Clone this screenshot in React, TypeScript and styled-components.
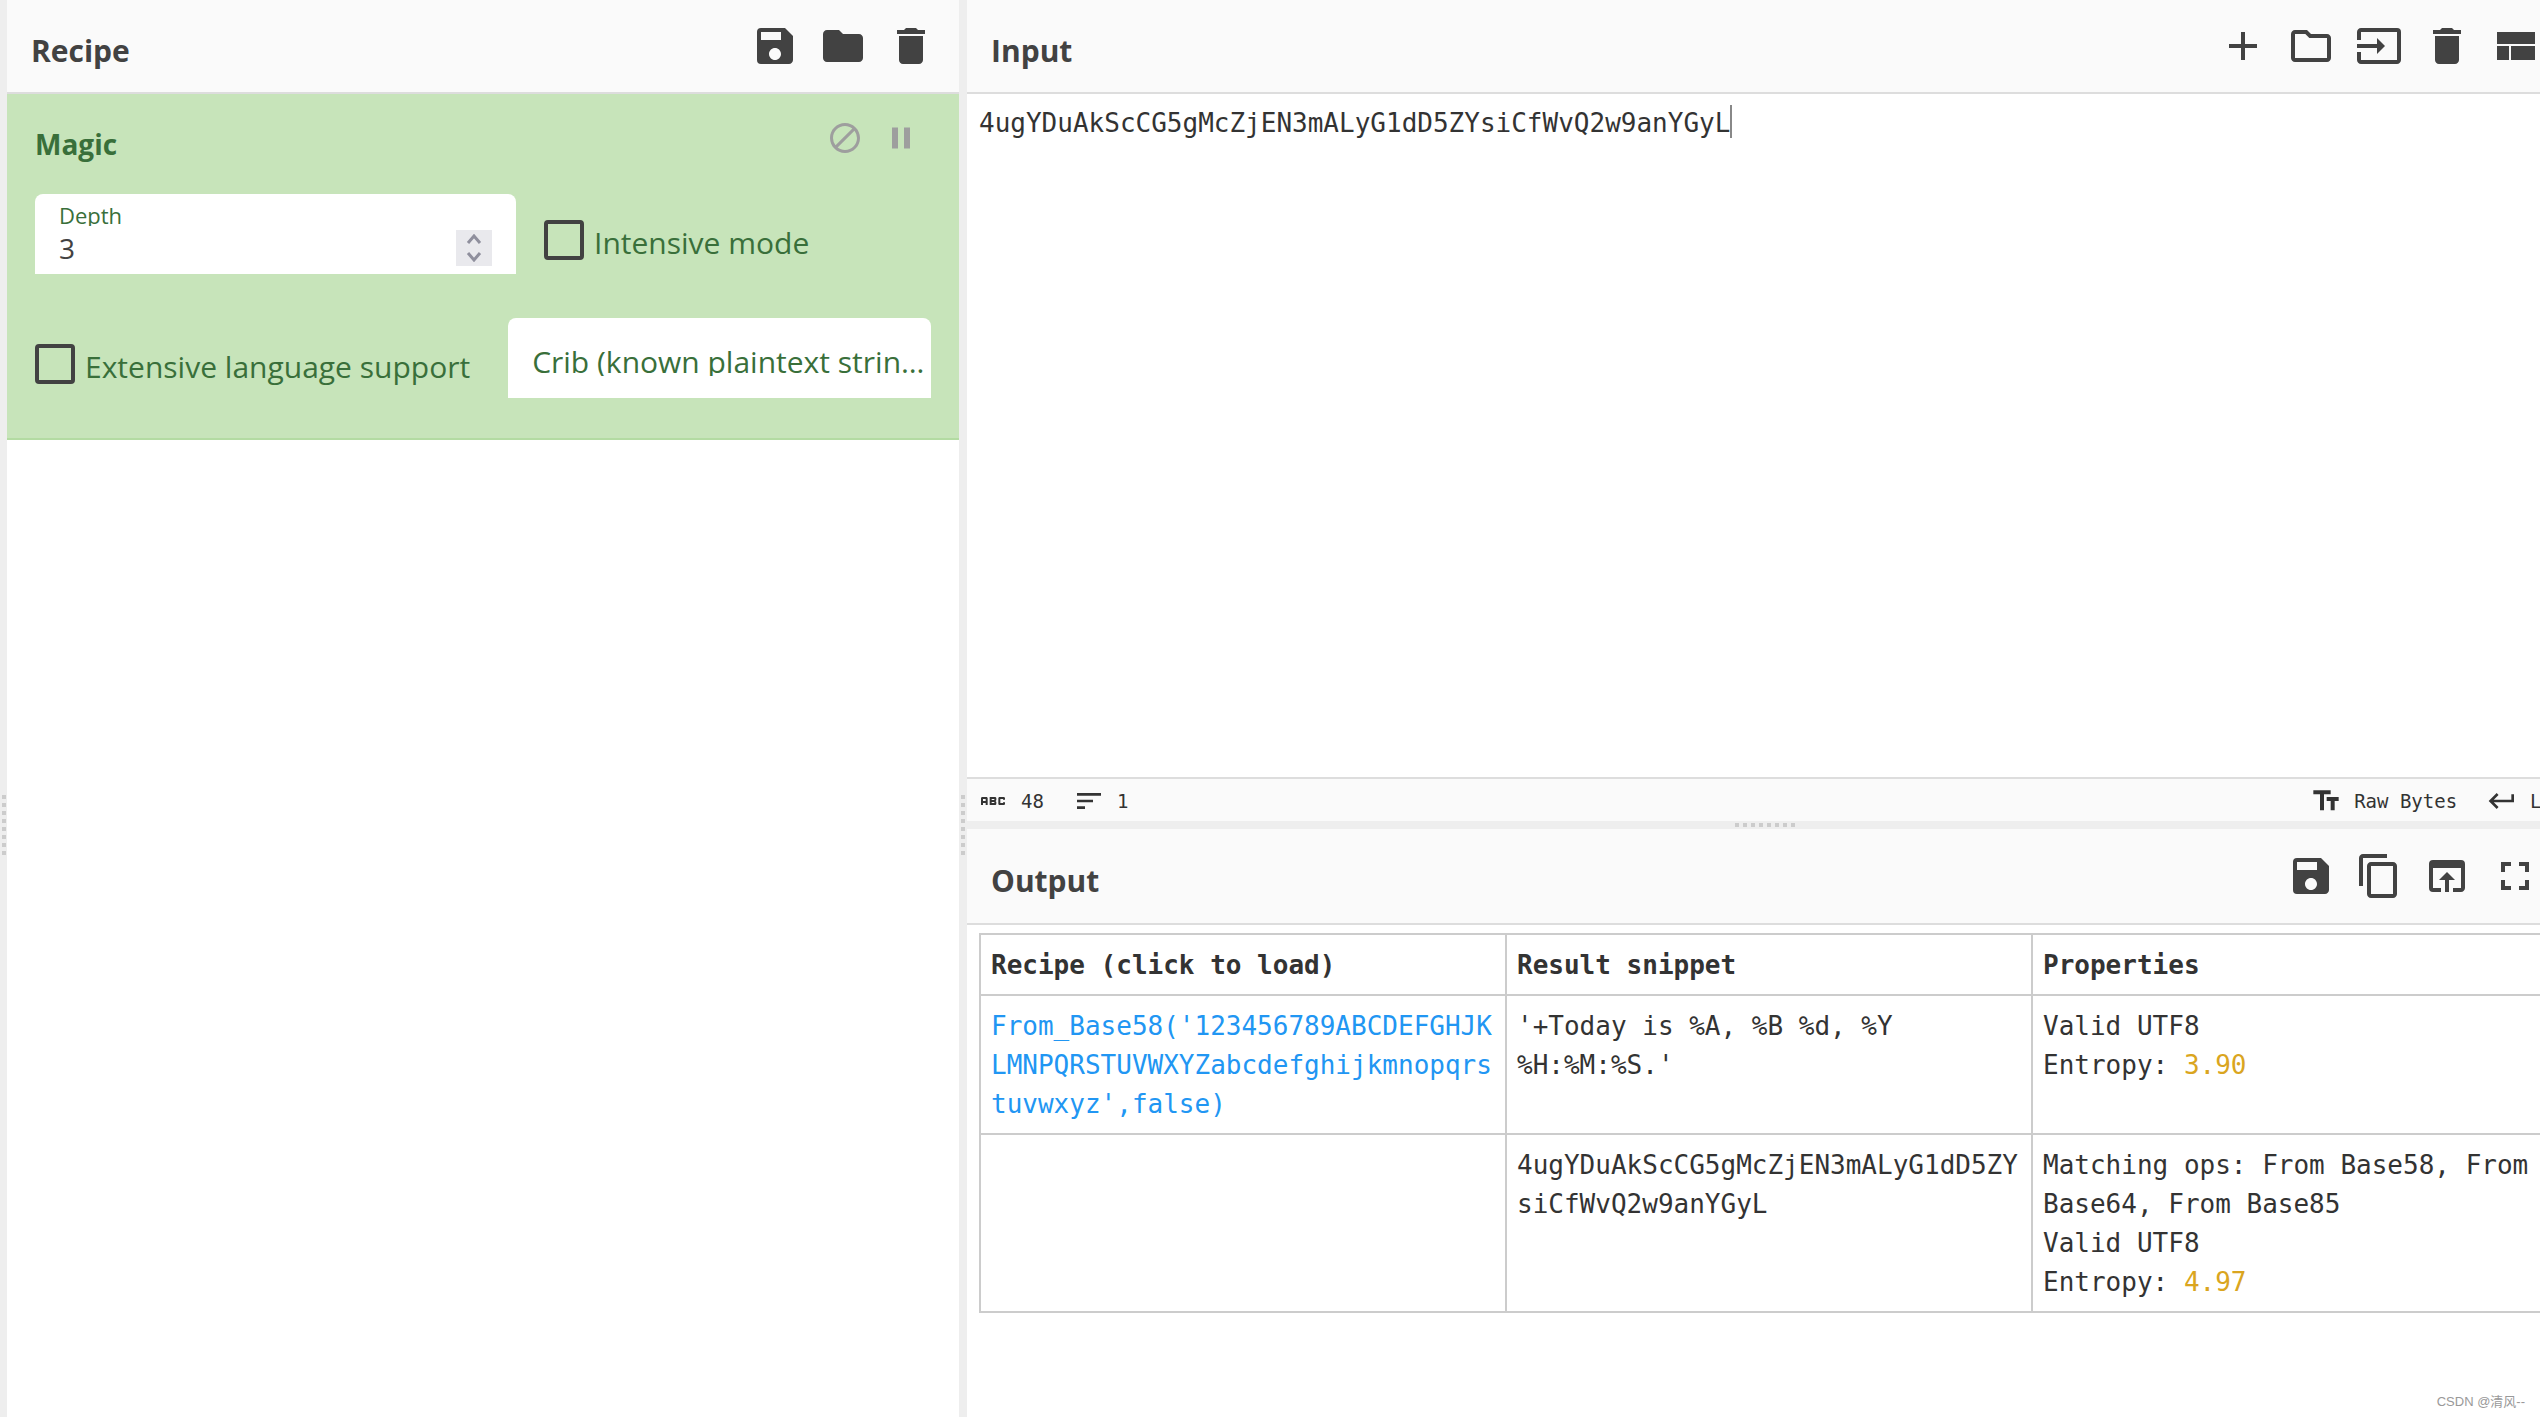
import React from "react";
import styled, { createGlobalStyle } from "styled-components";
import {
  MdAbc,
  MdAdd,
  MdBlock,
  MdContentCopy,
  MdDelete,
  MdFolder,
  MdFullscreen,
  MdInput,
  MdKeyboardReturn,
  MdOpenInBrowser,
  MdOutlineFolder,
  MdPause,
  MdSave,
  MdSort,
  MdTextFields,
} from "react-icons/md";

const sans = `"Open Sans", "Noto Sans", sans-serif`;
const mono = `"DejaVu Sans Mono", monospace`;

const GlobalStyle = createGlobalStyle`
  *, *::before, *::after { box-sizing: border-box; }
  body { margin: 0; background: #fff; font-family: ${sans}; color: #424242; }
`;

const Viewport = styled.main`
  position: relative;
  height: 100vh;
  overflow: hidden;
`;

/* The workspace runs past the right and bottom window edges. */
const Workspace = styled.div`
  display: grid;
  grid-template-columns: 7px minmax(0, 952fr) 8px minmax(0, 1596fr);
  width: calc(100% + 23px);
  height: calc(100% + 233px);
`;

const Gutter = styled.div<{ $horizontal?: boolean }>`
  display: flex;
  flex: none;
  flex-direction: ${(p) => (p.$horizontal ? "row" : "column")};
  align-items: center;
  justify-content: center;
  gap: 4px;
  height: ${(p) => (p.$horizontal ? "8px" : "auto")};
  background: #eee;
`;

const GripDot = styled.span`
  width: 4px;
  height: 4px;
  background: #ccc;
`;

const Panel = styled.section`
  display: flex;
  flex-direction: column;
  flex: 1 1 0;
  min-width: 0;
  min-height: 0;
`;

const Column = styled.div`
  display: flex;
  flex-direction: column;
  min-width: 0;
  min-height: 0;
`;

const PanelHeader = styled.header<{ $tall?: boolean }>`
  display: flex;
  align-items: center;
  justify-content: space-between;
  height: ${(p) => (p.$tall ? 96 : 94)}px;
  flex: none;
  padding: 0 24px;
  background: #fafafa;
  border-bottom: 2px solid #ddd;
`;

const PanelTitle = styled.h2`
  margin: 0;
  padding-top: 10px;
  font-size: 30px;
  line-height: 40px;
  font-weight: 700;
`;

const Toolbar = styled.div`
  display: flex;
  gap: 20px;
`;

const IconButton = styled.button<{ $size: number }>`
  display: block;
  width: ${(p) => p.$size}px;
  height: ${(p) => p.$size}px;
  padding: 0;
  border: 0;
  background: none;
  color: inherit;
  svg { display: block; width: 100%; height: 100%; }
`;

const Operation = styled.article`
  padding: 26px 28px 40px;
  background: #c7e4ba;
  border-bottom: 2px solid #b3dba2;
  color: #396f3a;
`;

const OperationHeader = styled.div`
  display: flex;
  align-items: flex-start;
  justify-content: space-between;
  height: 74px;
  padding-right: 12px;
`;

const OperationTitle = styled.h3`
  margin: 0;
  padding-top: 4px;
  font-size: 28px;
  line-height: 40px;
  font-weight: 700;
`;

const OperationTools = styled(Toolbar)`
  color: #9e9e9e;
`;

const ArgRow = styled.div`
  display: flex;
  align-items: flex-start;
  gap: 28px;
  & + & { margin-top: 44px; gap: 38px; }
`;

const FieldBox = styled.div<{ $grow?: boolean }>`
  display: grid;
  align-content: start;
  flex: ${(p) => (p.$grow ? "1 1 0" : "0 0 481px")};
  min-width: 0;
  height: 80px;
  padding: 10px 24px 0;
  border-radius: 8px 8px 0 0;
  background: #fff;
`;

const FloatingLabel = styled.label`
  height: 22px;
  overflow: hidden;
  font-size: 22px;
  line-height: 22px;
`;

const DepthControl = styled.div`
  display: flex;
  align-items: center;
  justify-content: space-between;
  padding-top: 2px;
`;

const NumberInput = styled.input`
  flex: 1;
  min-width: 0;
  height: 40px;
  padding: 0;
  border: 0;
  outline: 0;
  background: none;
  color: #424242;
  font: 28px/40px ${sans};
  appearance: textfield;
  &::-webkit-inner-spin-button { appearance: none; margin: 0; }
`;

const Spinner = styled.div`
  display: grid;
  width: 36px;
  height: 36px;
  background: #e9e9ed;
`;

const SpinButton = styled.button`
  display: grid;
  place-items: center;
  padding: 0;
  border: 0;
  background: none;
  color: #8f8f9d;
`;

const CribBox = styled(FieldBox)`
  padding: 0 0 0 24px;
`;

const CribLabel = styled.label`
  grid-area: 1 / 1;
  height: 34px;
  margin-top: 24px;
  overflow: hidden;
  white-space: nowrap;
  text-overflow: ellipsis;
  font-size: 30px;
  line-height: 40px;
`;

const CribInput = styled.input`
  grid-area: 1 / 1;
  height: 80px;
  min-width: 0;
  padding: 0;
  border: 0;
  outline: 0;
  background: none;
  font: 30px/40px ${sans};
`;

const CheckLabel = styled.label`
  display: flex;
  align-items: center;
  gap: 10px;
  height: 40px;
  margin-top: 26px;
  font-size: 30px;
  line-height: 40px;
  white-space: nowrap;
  span { padding-top: 6px; }
`;

const Checkbox = styled.input`
  appearance: none;
  flex: none;
  width: 40px;
  height: 40px;
  margin: 0;
  border: 4px solid #424242;
  border-radius: 4px;
`;

const Editor = styled.div`
  position: relative;
  display: flex;
  flex: 1;
  min-height: 0;
  font: 26px/39px ${mono};
`;

const EditorText = styled.textarea`
  flex: 1;
  margin: 0;
  padding: 10px 12px;
  border: 0;
  outline: 0;
  resize: none;
  background: #fff;
  color: #333;
  font: inherit;
`;

const Caret = styled.span<{ $column: number }>`
  position: absolute;
  top: 11px;
  left: calc(12px + ${(p) => p.$column}ch);
  width: 2px;
  height: 33px;
  background: #888;
`;

const StatusBar = styled.footer`
  display: flex;
  flex: none;
  align-items: center;
  justify-content: space-between;
  height: 44px;
  padding: 2px 10px 0;
  border-top: 2px solid #ddd;
  background: #fafafa;
  color: #333;
  font: 19px/24px ${mono};
`;

const StatusGroup = styled.div`
  display: flex;
  gap: 29px;
`;

const StatusItem = styled.span`
  display: flex;
  align-items: center;
  gap: 12px;
  svg { width: 32px; height: 32px; }
`;

const StatusButton = styled.button`
  display: flex;
  align-items: center;
  gap: 12px;
  padding: 0;
  border: 0;
  background: none;
  color: inherit;
  font: inherit;
  svg { width: 32px; height: 32px; }
`;

const OutputBody = styled.div`
  flex: 1;
  min-height: 0;
  padding: 8px 4px 0 12px;
`;

const ResultTable = styled.table`
  width: 100%;
  table-layout: fixed;
  border-collapse: collapse;
  color: #333;
  font: 26px/39px ${mono};
`;

const Cell = styled.td`
  padding: 11px 10px 9px;
  border: 2px solid #ccc;
  vertical-align: top;
  text-align: left;
  overflow-wrap: anywhere;
`;

const RecipeLink = styled.a`
  color: #2196f3;
  text-decoration: none;
`;

const Entropy = styled.span`
  color: #daa520;
`;

const Watermark = styled.div`
  position: absolute;
  right: 15px;
  bottom: 6px;
  color: #999;
  font: 13px/18px "Liberation Sans", "Noto Sans CJK SC", sans-serif;
`;

const INPUT = "4ugYDuAkScCG5gMcZjEN3mALyG1dD5ZYsiCfWvQ2w9anYGyL";

const Grip = ({ horizontal }: { horizontal?: boolean }) => (
  <Gutter $horizontal={horizontal}>
    {Array.from({ length: 8 }, (_, i) => (
      <GripDot key={i} />
    ))}
  </Gutter>
);

const ViewCompact = () => (
  <svg viewBox="0 0 24 24" fill="currentColor">
    <path d="M3 19h6v-7H3v7zm7 0h12v-7H10v7zM3 5v6h19V5H3z" />
  </svg>
);

const Chevron = ({ down }: { down?: boolean }) => (
  <svg width="16" height="10" viewBox="0 0 16 10" fill="none" stroke="currentColor" strokeWidth="3">
    <path d={down ? "M2 1l6 7 6-7" : "M2 9l6-7 6 7"} />
  </svg>
);

type Tool = { label: string; icon: React.ReactNode };

const Tools = ({ items }: { items: Tool[] }) => (
  <Toolbar>
    {items.map((t) => (
      <IconButton key={t.label} $size={48} type="button" aria-label={t.label}>
        {t.icon}
      </IconButton>
    ))}
  </Toolbar>
);

export default function App() {
  return (
    <Viewport>
      <GlobalStyle />
      <Workspace>
        <Grip />
        <Panel>
          <PanelHeader>
            <PanelTitle>Recipe</PanelTitle>
            <Tools
              items={[
                { label: "Save recipe", icon: <MdSave /> },
                { label: "Load recipe", icon: <MdFolder /> },
                { label: "Clear recipe", icon: <MdDelete /> },
              ]}
            />
          </PanelHeader>
          <Operation>
            <OperationHeader>
              <OperationTitle>Magic</OperationTitle>
              <OperationTools>
                <IconButton $size={36} type="button" aria-label="Disable operation">
                  <MdBlock />
                </IconButton>
                <IconButton $size={36} type="button" aria-label="Set breakpoint">
                  <MdPause />
                </IconButton>
              </OperationTools>
            </OperationHeader>
            <ArgRow>
              <FieldBox>
                <FloatingLabel htmlFor="depth">Depth</FloatingLabel>
                <DepthControl>
                  <NumberInput id="depth" type="number" defaultValue={3} />
                  <Spinner>
                    <SpinButton type="button" aria-label="Increase depth">
                      <Chevron />
                    </SpinButton>
                    <SpinButton type="button" aria-label="Decrease depth">
                      <Chevron down />
                    </SpinButton>
                  </Spinner>
                </DepthControl>
              </FieldBox>
              <CheckLabel>
                <Checkbox type="checkbox" />
                <span>Intensive mode</span>
              </CheckLabel>
            </ArgRow>
            <ArgRow>
              <CheckLabel>
                <Checkbox type="checkbox" />
                <span>Extensive language support</span>
              </CheckLabel>
              <CribBox $grow>
                <CribInput id="crib" type="text" />
                <CribLabel htmlFor="crib">Crib (known plaintext string or regex)</CribLabel>
              </CribBox>
            </ArgRow>
          </Operation>
        </Panel>
        <Grip />
        <Column>
          <Panel>
            <PanelHeader>
              <PanelTitle>Input</PanelTitle>
              <Tools
                items={[
                  { label: "Add a new input tab", icon: <MdAdd /> },
                  { label: "Open folder as input", icon: <MdOutlineFolder /> },
                  { label: "Open file as input", icon: <MdInput /> },
                  { label: "Clear input and output", icon: <MdDelete /> },
                  { label: "Reset pane layout", icon: <ViewCompact /> },
                ]}
              />
            </PanelHeader>
            <Editor>
              <EditorText aria-label="Input" spellCheck={false} defaultValue={INPUT} />
              <Caret $column={INPUT.length} />
            </Editor>
            <StatusBar>
              <StatusGroup>
                <StatusItem>
                  <MdAbc />
                  48
                </StatusItem>
                <StatusItem>
                  <MdSort />
                  1
                </StatusItem>
              </StatusGroup>
              <StatusGroup>
                <StatusButton type="button">
                  <MdTextFields />
                  Raw Bytes
                </StatusButton>
                <StatusButton type="button">
                  <MdKeyboardReturn />
                  LF
                </StatusButton>
              </StatusGroup>
            </StatusBar>
          </Panel>
          <Grip horizontal />
          <Panel>
            <PanelHeader $tall>
              <PanelTitle>Output</PanelTitle>
              <Tools
                items={[
                  { label: "Save output to file", icon: <MdSave /> },
                  { label: "Copy output", icon: <MdContentCopy /> },
                  { label: "Replace input with output", icon: <MdOpenInBrowser /> },
                  { label: "Maximise output pane", icon: <MdFullscreen /> },
                ]}
              />
            </PanelHeader>
            <OutputBody>
              <ResultTable>
                <thead>
                  <tr>
                    <Cell as="th">Recipe (click to load)</Cell>
                    <Cell as="th">Result snippet</Cell>
                    <Cell as="th">Properties</Cell>
                  </tr>
                </thead>
                <tbody>
                  <tr>
                    <Cell>
                      <RecipeLink href="#recipe">
                        From_Base58('123456789ABCDEFGHJKLMNPQRSTUVWXYZabcdefghijkmnopqrstuvwxyz',false)
                      </RecipeLink>
                    </Cell>
                    <Cell>
                      '+Today is %A, %B %d, %Y
                      <br />
                      %H:%M:%S.'
                    </Cell>
                    <Cell>
                      Valid UTF8
                      <br />
                      Entropy: <Entropy>3.90</Entropy>
                    </Cell>
                  </tr>
                  <tr>
                    <Cell />
                    <Cell>{INPUT}</Cell>
                    <Cell>
                      Matching ops: From Base58, From Base64, From Base85
                      <br />
                      Valid UTF8
                      <br />
                      Entropy: <Entropy>4.97</Entropy>
                    </Cell>
                  </tr>
                </tbody>
              </ResultTable>
            </OutputBody>
          </Panel>
        </Column>
      </Workspace>
      <Watermark>CSDN @清风--</Watermark>
    </Viewport>
  );
}
